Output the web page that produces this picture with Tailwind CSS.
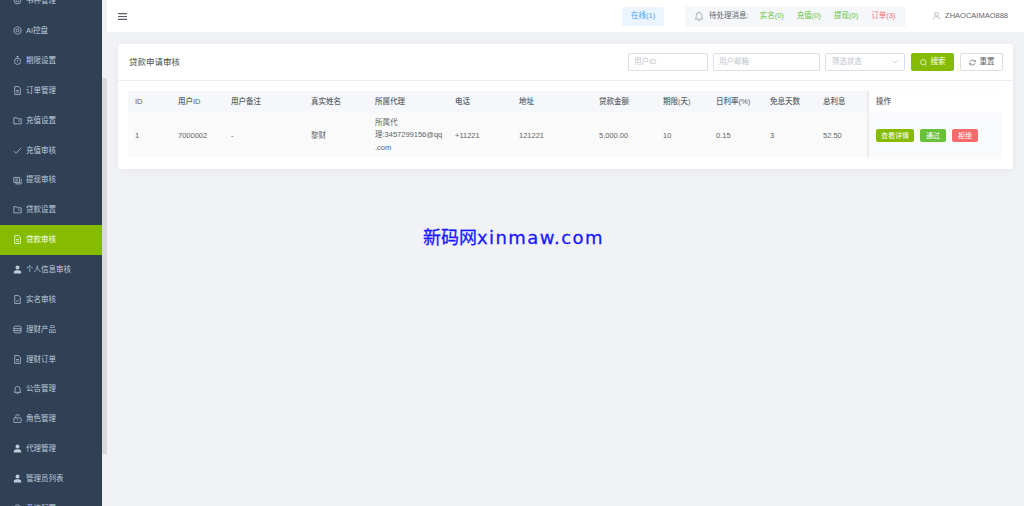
<!DOCTYPE html>
<html lang="en">
<head>
<meta charset="UTF-8">
<title>贷款审核</title>
<script src="https://cdn.jsdelivr.net/npm/@tailwindcss/browser@4"></script>
</head>
<body class="w-[1024px] h-[506px] overflow-hidden bg-[#f0f2f6] font-['Liberation_Sans','Noto_Sans_CJK_SC',sans-serif] text-[7.5px] text-[#606266]">
<div class="flex h-[506px]">
  <!-- sidebar -->
  <aside class="w-[102px] shrink-0 overflow-hidden bg-[#304156] text-[#bfcbd9]">
    <ul class="-mt-[14px]">
      <li class="flex h-[29.87px] items-center pl-[13px] gap-[4px]"><svg class="w-[9px] h-[9px]" viewBox="0 0 16 16" fill="none" stroke="currentColor" stroke-width="1.3"><circle cx="8" cy="8" r="6"/><circle cx="8" cy="8" r="2.5"/></svg><span>书种管理</span></li>
      <li class="flex h-[29.87px] items-center pl-[13px] gap-[4px]"><svg class="w-[9px] h-[9px]" viewBox="0 0 16 16" fill="none" stroke="currentColor" stroke-width="1.3"><path d="M8 1l6 3.5v7L8 15l-6-3.5v-7z"/><circle cx="8" cy="8" r="2.5"/></svg><span>AI控盘</span></li>
      <li class="flex h-[29.87px] items-center pl-[13px] gap-[4px]"><svg class="w-[9px] h-[9px]" viewBox="0 0 16 16" fill="none" stroke="currentColor" stroke-width="1.3"><circle cx="8" cy="9.5" r="5.5"/><path d="M8 1v3M6 1h4M8 7v3"/></svg><span>期限设置</span></li>
      <li class="flex h-[29.87px] items-center pl-[13px] gap-[4px]"><svg class="w-[9px] h-[9px]" viewBox="0 0 16 16" fill="none" stroke="currentColor" stroke-width="1.3"><path d="M3 1h7l3 3v11H3zM5.5 8h5M5.5 11h5"/></svg><span>订单管理</span></li>
      <li class="flex h-[29.87px] items-center pl-[13px] gap-[4px]"><svg class="w-[9px] h-[9px]" viewBox="0 0 16 16" fill="none" stroke="currentColor" stroke-width="1.3"><path d="M1.5 3h5l1 2h7v9h-13zM9 9h3"/></svg><span>充值设置</span></li>
      <li class="flex h-[29.87px] items-center pl-[13px] gap-[4px]"><svg class="w-[9px] h-[9px]" viewBox="0 0 16 16" fill="none" stroke="currentColor" stroke-width="1.3"><path d="M1.5 9l4 4 9-10"/></svg><span>充值审核</span></li>
      <li class="flex h-[29.87px] items-center pl-[13px] gap-[4px]"><svg class="w-[9px] h-[9px]" viewBox="0 0 16 16" fill="none" stroke="currentColor" stroke-width="1.3"><path d="M1.5 2.5h10v9h-10zM4 14h10.5V5M4 5.5h5M4 8.5h5"/></svg><span>提现审核</span></li>
      <li class="flex h-[29.87px] items-center pl-[13px] gap-[4px]"><svg class="w-[9px] h-[9px]" viewBox="0 0 16 16" fill="none" stroke="currentColor" stroke-width="1.3"><path d="M1.5 3h5l1 2h7v9h-13zM9 9h3"/></svg><span>贷款设置</span></li>
      <li class="flex h-[29.87px] items-center pl-[13px] gap-[4px] bg-[#85bb00] text-white"><svg class="w-[9px] h-[9px]" viewBox="0 0 16 16" fill="none" stroke="currentColor" stroke-width="1.3"><path d="M3 1h7l3 3v11H3zM5.5 8h5M5.5 11h5"/></svg><span>贷款审核</span></li>
      <li class="flex h-[29.87px] items-center pl-[13px] gap-[4px]"><svg class="w-[9px] h-[9px]" viewBox="0 0 16 16" fill="currentColor"><circle cx="8" cy="4.5" r="3.5"/><path d="M1.5 15v-2.5C1.5 10.5 4 9.5 8 9.5s6.5 1 6.5 3V15z"/></svg><span>个人信息审核</span></li>
      <li class="flex h-[29.87px] items-center pl-[13px] gap-[4px]"><svg class="w-[9px] h-[9px]" viewBox="0 0 16 16" fill="none" stroke="currentColor" stroke-width="1.3"><path d="M3 1h7l3 3v11H3zM5.5 10l2 1.5 3-3.5"/></svg><span>实名审核</span></li>
      <li class="flex h-[29.87px] items-center pl-[13px] gap-[4px]"><svg class="w-[9px] h-[9px]" viewBox="0 0 16 16" fill="none" stroke="currentColor" stroke-width="1.3"><rect x="1.5" y="2" width="13" height="12" rx="3"/><path d="M1.5 6.5h13M1.5 10h13"/></svg><span>理财产品</span></li>
      <li class="flex h-[29.87px] items-center pl-[13px] gap-[4px]"><svg class="w-[9px] h-[9px]" viewBox="0 0 16 16" fill="none" stroke="currentColor" stroke-width="1.3"><path d="M3 1h7l3 3v11H3zM5.5 8h5M5.5 11h5"/></svg><span>理财订单</span></li>
      <li class="flex h-[29.87px] items-center pl-[13px] gap-[4px]"><svg class="w-[9px] h-[9px]" viewBox="0 0 16 16" fill="none" stroke="currentColor" stroke-width="1.3"><path d="M3.5 12V7a4.5 4.5 0 0 1 9 0v5l1.5 1H2zM6.5 15h3"/></svg><span>公告管理</span></li>
      <li class="flex h-[29.87px] items-center pl-[13px] gap-[4px]"><svg class="w-[9px] h-[9px]" viewBox="0 0 16 16" fill="none" stroke="currentColor" stroke-width="1.3"><rect x="1.5" y="7" width="13" height="8" rx="1"/><path d="M5 7V4a3 3 0 0 1 6 0M8 10v2"/></svg><span>角色管理</span></li>
      <li class="flex h-[29.87px] items-center pl-[13px] gap-[4px]"><svg class="w-[9px] h-[9px]" viewBox="0 0 16 16" fill="currentColor"><circle cx="8" cy="4.5" r="3.5"/><path d="M1.5 15v-2.5C1.5 10.5 4 9.5 8 9.5s6.5 1 6.5 3V15z"/></svg><span>代理管理</span></li>
      <li class="flex h-[29.87px] items-center pl-[13px] gap-[4px]"><svg class="w-[9px] h-[9px]" viewBox="0 0 16 16" fill="currentColor"><circle cx="8" cy="4.5" r="3.5"/><path d="M1.5 15v-2.5C1.5 10.5 4 9.5 8 9.5s6.5 1 6.5 3V15z"/></svg><span>管理员列表</span></li>
      <li class="flex h-[29.87px] items-center pl-[13px] gap-[4px]"><svg class="w-[9px] h-[9px]" viewBox="0 0 16 16" fill="none" stroke="currentColor" stroke-width="1.3"><path d="M8 1l6 3.5v7L8 15l-6-3.5v-7z"/><circle cx="8" cy="8" r="2.5"/></svg><span>系统配置</span></li>
    </ul>
  </aside>
  <!-- sidebar scrollbar -->
  <div class="w-[5px] shrink-0 bg-[#f1f1f1] pt-[78px]"><div class="h-[376px] bg-[#d9d9d9]"></div></div>
  <div class="flex-1 min-w-0 relative">
    <!-- top bar -->
    <header class="flex h-[32px] items-center bg-white pl-[11px] pr-[16px]">
      <svg class="w-[9px] h-[9px] text-[#5a5e66]" viewBox="0 0 9 9" fill="currentColor"><path d="M0 1h9v1.2H0zM0 3.9h9v1.2H0zM0 6.8h9V8H0z"/></svg>
      <div class="ml-auto flex h-[19px] w-[42px] items-center justify-center rounded-[2px] bg-[#ecf5ff] text-[#409eff]">在线(1)</div>
      <div class="ml-[21px] flex h-[21px] w-[221px] items-center rounded-[3px] bg-[#f5f7fa] pl-[9px]">
        <svg class="w-[10px] h-[10px] text-[#909399]" viewBox="0 0 16 16" fill="none" stroke="currentColor" stroke-width="1.1"><path d="M3.5 12V7a4.5 4.5 0 0 1 9 0v5l1.5 1H2zM6.5 15h3M8 1v1.5"/></svg>
        <span class="ml-[5px]">待处理消息:</span>
        <span class="ml-[11px] text-[#67c23a]">实名(0)</span>
        <span class="ml-[13px] text-[#67c23a]">充值(0)</span>
        <span class="ml-[13px] text-[#67c23a]">提现(0)</span>
        <span class="ml-[13px] text-[#f56c6c]">订单(3)</span>
      </div>
      <svg class="ml-[27px] w-[7px] h-[8px] text-[#909399]" viewBox="0 0 14 16" fill="none" stroke="currentColor" stroke-width="1.2"><circle cx="7" cy="4.5" r="3.5"/><path d="M1 15c0-4 2.5-6 6-6s6 2 6 6"/></svg>
      <span class="ml-[5px] whitespace-nowrap">ZHAOCAIMAO888</span>
    </header>
    <main class="pt-[12px] pl-[11px]">
      <section class="w-[895px] h-[125px] rounded-[3px] bg-white shadow-[0_1px_6px_rgba(0,0,0,0.06)]">
        <div class="flex h-[37px] items-center border-b border-[#ebeef5] pl-[11px] pr-[10px]">
          <h2 class="text-[8.5px] text-[#4a4d52] font-normal">贷款申请审核</h2>
          <div class="ml-auto flex h-[18px] w-[80px] items-center rounded-[2px] border border-[#dcdfe6] pl-[5px] text-[#c0c4cc]">用户ID</div>
          <div class="ml-[5px] flex h-[18px] w-[107px] items-center rounded-[2px] border border-[#dcdfe6] pl-[5px] text-[#c0c4cc]">用户邮箱</div>
          <div class="ml-[5px] flex h-[18px] w-[80px] items-center justify-between rounded-[2px] border border-[#dcdfe6] px-[6px] text-[#c0c4cc]">筛选状态
            <svg class="w-[6px] h-[4px]" viewBox="0 0 6 4" fill="none" stroke="currentColor" stroke-width="0.7"><path d="M0.5 0.5L3 3l2.5-2.5"/></svg>
          </div>
          <button class="ml-[6px] flex h-[18px] w-[43px] items-center justify-center gap-[4px] rounded-[2px] bg-[#85bb00] text-white">
            <svg class="w-[7px] h-[7px]" viewBox="0 0 8 8" fill="none" stroke="currentColor" stroke-width="0.8"><circle cx="3.7" cy="3.7" r="3"/><path d="M6 6l1.5 1.5"/></svg>搜索</button>
          <button class="ml-[6px] flex h-[18px] w-[43px] items-center justify-center gap-[4px] rounded-[2px] border border-[#dcdfe6] bg-white">
            <svg class="w-[7px] h-[7px]" viewBox="0 0 8 8" fill="none" stroke="currentColor" stroke-width="0.8"><path d="M1 3.2A3.2 3.2 0 0 1 7 3M7 4.8A3.2 3.2 0 0 1 1 5M7.2 1.3V3H5.5M.8 6.7V5h1.7"/></svg>重置</button>
        </div>
        <div class="ml-[10px] mt-[10px] w-[875px]">
          <table class="w-full table-fixed border-collapse">
            <colgroup>
              <col class="w-[43px]"><col class="w-[53px]"><col class="w-[80px]"><col class="w-[64px]"><col class="w-[80px]"><col class="w-[64px]"><col class="w-[80px]"><col class="w-[64px]"><col class="w-[53px]"><col class="w-[54px]"><col class="w-[53px]"><col class="w-[53px]"><col class="w-[134px]">
            </colgroup>
            <thead>
              <tr class="h-[22px] text-left">
                <th class="bg-[#f5f7fa] pl-[7px] font-medium">ID</th>
                <th class="bg-[#f5f7fa] pl-[7px] font-medium">用户ID</th>
                <th class="bg-[#f5f7fa] pl-[7px] font-medium">用户备注</th>
                <th class="bg-[#f5f7fa] pl-[7px] font-medium">真实姓名</th>
                <th class="bg-[#f5f7fa] pl-[7px] font-medium">所属代理</th>
                <th class="bg-[#f5f7fa] pl-[7px] font-medium">电话</th>
                <th class="bg-[#f5f7fa] pl-[7px] font-medium">地址</th>
                <th class="bg-[#f5f7fa] pl-[7px] font-medium">贷款金额</th>
                <th class="bg-[#f5f7fa] pl-[7px] font-medium">期限(天)</th>
                <th class="bg-[#f5f7fa] pl-[7px] font-medium">日利率(%)</th>
                <th class="bg-[#f5f7fa] pl-[7px] font-medium">免息天数</th>
                <th class="bg-[#f5f7fa] pl-[7px] font-medium">总利息</th>
                <th class="bg-white border-b border-[#f5f7fa] pl-[7px] font-medium shadow-[-2px_0_2px_rgba(0,0,0,0.06)]">操作</th>
              </tr>
            </thead>
            <tbody>
              <tr class="h-[45px] bg-[#fafafa]">
                <td class="pl-[7px]">1</td>
                <td class="pl-[7px]">7000002</td>
                <td class="pl-[7px]">-</td>
                <td class="pl-[7px]">黎财</td>
                <td class="pl-[7px] leading-[12.5px] whitespace-nowrap">所属代<br>理:3457299156@qq<br>.com</td>
                <td class="pl-[7px]">+11221</td>
                <td class="pl-[7px]">121221</td>
                <td class="pl-[7px]">5,000.00</td>
                <td class="pl-[7px]">10</td>
                <td class="pl-[7px]">0.15</td>
                <td class="pl-[7px]">3</td>
                <td class="pl-[7px]">52.50</td>
                <td class="bg-[#f9fafc] pl-[7px] shadow-[-2px_0_2px_rgba(0,0,0,0.06)]">
                  <div class="flex gap-[6px]">
                    <button class="h-[13px] w-[38px] rounded-[2px] bg-[#85bb00] text-[7px] text-white">查看详情</button>
                    <button class="h-[13px] w-[26px] rounded-[2px] bg-[#67c23a] text-[7px] text-white">通过</button>
                    <button class="h-[13px] w-[26px] rounded-[2px] bg-[#f56c6c] text-[7px] text-white">拒绝</button>
                  </div>
                </td>
              </tr>
            </tbody>
          </table>
        </div>
      </section>
    </main>
    <!-- watermark over the page -->
    <div class="absolute left-[316px] top-[225px] whitespace-nowrap font-['DejaVu_Sans','Noto_Sans_CJK_SC',sans-serif] text-[18px] leading-[26px] text-[#1a1aff] [-webkit-text-stroke:0.3px_#1a1aff]">新码网<span class="tracking-[1.4px]">xinmaw.com</span></div>
  </div>
</div>
</body>
</html>
